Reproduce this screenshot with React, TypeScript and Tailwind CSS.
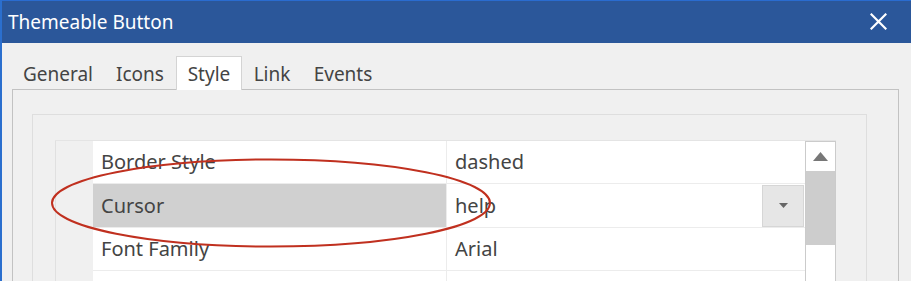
import React from "react";

const rows = [
  { label: "Border Style", value: "dashed", h: "h-[43px]" },
  { label: "Cursor", value: "help", h: "h-[44px]", selected: true },
  { label: "Font Family", value: "Arial", h: "h-[43px]" },
  { label: "", value: "", h: "h-[43px]" },
];

const tabs = [
  { name: "General", w: "w-[92px]" },
  { name: "Icons", w: "w-[72px]" },
  { name: "Style", w: "w-[66px]", active: true },
  { name: "Link", w: "w-[60px]" },
  { name: "Events", w: "w-[82px]" },
];

export default function App() {
  return (
    <div
      className="relative w-[911px] h-[281px] overflow-hidden bg-[#f0f0f0] border-l-2 border-[#2b6fce]"
      style={{ fontFamily: '"Noto Sans", "Open Sans", sans-serif' }}
    >
      {/* Title bar */}
      <div className="h-[43px] bg-[#2b579a] border-t border-[#2a6cd0] flex items-center justify-between pl-[6px] pr-[24px]">
        <span className="text-white text-[19px] leading-none mt-[1px]">Themeable Button</span>
        <svg width="17" height="17" viewBox="0 0 17 17" className="-mt-[2px]">
          <path d="M1.5 1.5 L15.5 15.5 M15.5 1.5 L1.5 15.5" stroke="#ffffff" strokeWidth="2.2" strokeLinecap="square" />
        </svg>
      </div>

      {/* Tabs */}
      <div className="flex pt-[13px] pl-[10px]">
        {tabs.map((t) => (
          <div
            key={t.name}
            className={`${t.w} h-[34px] flex items-center justify-center text-[19px] text-[#444444] ${
              t.active ? "relative z-10 bg-white border border-b-0 border-[#d4d4d4]" : ""
            }`}
          >
            <span className="mt-[2px]">{t.name}</span>
          </div>
        ))}
      </div>

      {/* Tab panel */}
      <div className="-mt-px ml-[10px] w-[887px] h-[220px] border border-[#c2c2c2] pt-[24px] pl-[19px]">
        <div className="w-[835px] h-[200px] border border-[#dedede] pt-[25px] pl-[22px]">
          <div className="flex w-[781px] border-t border-[#e4e4e4]">
            {/* gutter */}
            <div className="w-[38px] h-[180px] bg-[#f0f0f0] border-l border-[#e0e0e0]" />
            {/* table */}
            <div className="w-[712px] bg-white flex flex-col">
              {rows.map((r, i) => (
                <div key={i} className={`${r.h} flex border-b border-[#ececec]`}>
                  <div
                    className={`w-[353px] flex items-center pl-[8px] text-[20px] text-[#444444] ${
                      r.selected ? "bg-[#d0d0d0]" : ""
                    }`}
                  >
                    {r.label}
                  </div>
                  <div className="w-px bg-[#ececec]" />
                  <div className="flex-1 flex items-center justify-between pl-[8px] text-[20px] text-[#444444]">
                    <span>{r.value}</span>
                    {r.selected && (
                      <div className="w-[42px] h-[42px] mr-px bg-[#e6e6e6] border border-[#d6d6d6] flex items-center justify-center">
                        <svg width="9" height="5" viewBox="0 0 9 5">
                          <path d="M0 0 L9 0 L4.5 5 Z" fill="#666666" />
                        </svg>
                      </div>
                    )}
                  </div>
                </div>
              ))}
            </div>
            {/* scrollbar */}
            <div className="w-[31px] h-[180px] bg-white border-x border-t border-[#cbcbcb] flex flex-col">
              <div className="h-[29px] flex items-center justify-center">
                <svg width="15" height="9" viewBox="0 0 15 9">
                  <path d="M7.5 0 L15 9 L0 9 Z" fill="#777777" />
                </svg>
              </div>
              <div className="h-[74px] bg-[#cdcdcd]" />
            </div>
          </div>
        </div>
      </div>

      {/* annotation ellipse */}
      <svg
        className="absolute top-0 -left-[2px] pointer-events-none"
        width="911"
        height="281"
        viewBox="0 0 911 281"
      >
        <ellipse cx="271" cy="203" rx="219" ry="43.5" fill="none" stroke="#c0301f" strokeWidth="2" />
      </svg>
    </div>
  );
}
